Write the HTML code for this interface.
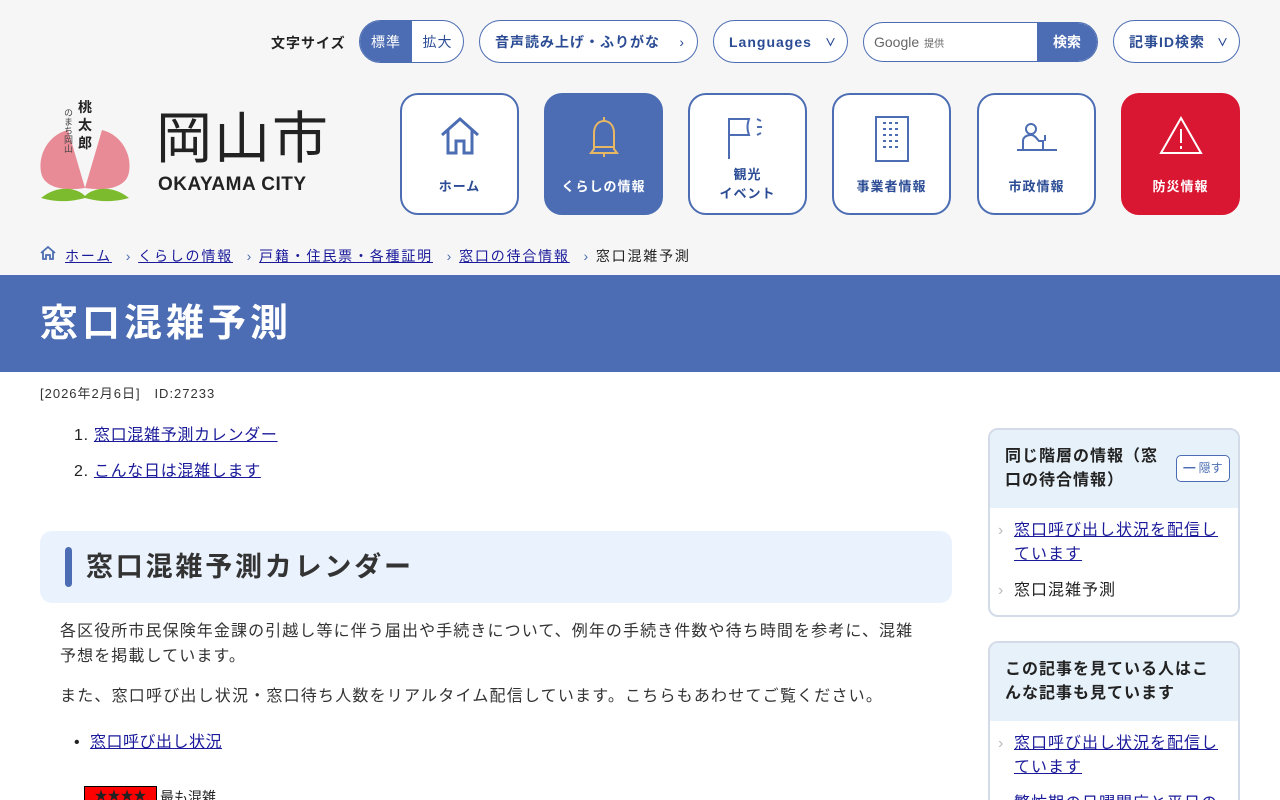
<!DOCTYPE html>
<html><head><meta charset="utf-8"><style>
*{box-sizing:border-box;margin:0;padding:0}
html,body{width:1280px;height:800px;overflow:hidden}
body{background:#fff;font-family:"Liberation Sans","Noto Sans CJK JP",sans-serif;color:#222;position:relative}
.top{position:absolute;left:0;top:0;width:1280px;height:275px;background:#f6f6f6}
.a{position:absolute}
.pill{position:absolute;border:1.5px solid #4c6db3;border-radius:22px;background:#fff;color:#2b4c94;font-weight:bold;font-size:14px;display:flex;align-items:center;letter-spacing:1px}
.nav{position:absolute;top:93px;width:119px;height:122px;border:2px solid #4c6db3;border-radius:18px;background:#fff;color:#2b4c94;font-weight:bold;font-size:13px;text-align:center;letter-spacing:1px}
.nav svg{position:absolute;left:50%;transform:translateX(-50%);top:20px}
.nav .t{position:absolute;left:0;right:0;top:82px;line-height:19px}
a{color:#1a1a9a;text-decoration:underline}
.bc{position:absolute;top:246px;font-size:14px;letter-spacing:1.8px}
.side{position:absolute;left:988px;width:252px;border:2px solid #d3dbe8;border-radius:10px;overflow:hidden;background:#fff}
.side h3{background:#e7f1f9;font-size:16px;line-height:24px;padding:15px 15px;letter-spacing:1px}
.side li{list-style:none;font-size:16px;line-height:24px;padding-left:24px;padding-right:12px;position:relative;letter-spacing:1px;margin-bottom:12px}
.side li:before{content:"›";position:absolute;left:8px;color:#bbb}
</style></head><body>
<div class="top"></div>
<div class="a" style="left:271px;top:33px;font-size:14px;font-weight:bold;letter-spacing:1px">文字サイズ</div>
<div class="pill" style="left:359px;top:20px;width:105px;height:43px;overflow:hidden;padding:0">
<div style="width:52px;height:100%;background:#4c6db3;color:#fff;display:flex;align-items:center;justify-content:center;font-weight:normal">標準</div><div style="flex:1;text-align:center;font-weight:normal">拡大</div></div>
<div class="pill" style="left:479px;top:20px;width:219px;height:43px;padding-left:15px">音声読み上げ・ふりがな<span style="position:absolute;right:12px;font-weight:normal">›</span></div>
<div class="pill" style="left:713px;top:20px;width:135px;height:43px;padding-left:15px">Languages<span style="position:absolute;right:10px;font-size:11px">∨</span></div>
<div class="pill" style="left:863px;top:22px;width:235px;height:40px;overflow:hidden;padding-left:10px;color:#666;font-weight:normal;letter-spacing:0">Google <span style="font-size:10px;margin-left:5px">提供</span>
<div style="position:absolute;right:0;top:0;width:60px;height:100%;background:#4c6db3;color:#fff;font-weight:bold;display:flex;align-items:center;justify-content:center">検索</div></div>
<div class="pill" style="left:1113px;top:20px;width:127px;height:43px;padding-left:15px">記事ID検索<span style="position:absolute;right:10px;font-size:11px">∨</span></div>

<svg class="a" style="left:38px;top:100px" width="95" height="106" viewBox="0 0 95 106">
<path d="M47 88 L30 30 C10 35 0 55 3 72 C5 85 20 92 47 88Z" fill="#e98b96"/>
<path d="M47 88 L64 30 C84 35 94 55 91 72 C89 85 74 92 47 88Z" fill="#e98b96"/>
<path d="M3 98 C20 84 40 88 47 96 C54 88 74 84 91 98 C70 104 55 100 47 98 C39 100 24 104 3 98Z" fill="#7dbb2e"/>
<text x="40" y="12" font-size="14" font-weight="bold" fill="#222">桃</text>
<text x="40" y="30" font-size="14" font-weight="bold" fill="#222">太</text>
<text x="40" y="48" font-size="14" font-weight="bold" fill="#222">郎</text>
<text x="30" y="8" font-size="9" fill="#444" writing-mode="tb">のまち岡山</text>
</svg>
<div class="a" style="left:156px;top:108px;font-size:56px;line-height:62px;letter-spacing:2px;color:#222">岡山市</div>
<div class="a" style="left:158px;top:174px;font-size:19px;font-weight:bold;letter-spacing:0.5px;color:#222">OKAYAMA CITY</div>

<div class="nav" style="left:400px"><svg width="44" height="44" viewBox="0 0 44 44" fill="none" stroke="#4c6db3" stroke-width="3"><path d="M4 20 L22 4 L40 20 M10 15 V38 H18 V26 H26 V38 H34 V15"/></svg><div class="t">ホーム</div></div>
<div class="nav" style="left:544px;background:#4c6db3;color:#fff"><svg width="44" height="46" viewBox="0 0 44 46" fill="none" stroke="#e8b763" stroke-width="2"><path d="M22 2 V6 M12 34 V18 C12 10 17 6 22 6 C27 6 32 10 32 18 V34 L35 38 H9 L12 34Z M12 32 H32 M22 38 V42"/></svg><div class="t">くらしの情報</div></div>
<div class="nav" style="left:688px"><svg width="50" height="46" viewBox="0 0 50 46" fill="none" stroke="#4c6db3" stroke-width="2"><path d="M6 44 V4 H26 C24 10 24 14 26 20 H6 M34 4 L38 6 M34 12 H39 M34 20 L38 18"/></svg><div class="t" style="top:70px">観光<br>イベント</div></div>
<div class="nav" style="left:832px"><svg width="36" height="48" viewBox="0 0 36 48" fill="none" stroke="#4c6db3" stroke-width="2"><rect x="2" y="2" width="32" height="44"/><path d="M9 8h18M9 14h18M9 20h18M9 26h18M9 32h18" stroke-dasharray="3 3"/></svg><div class="t">事業者情報</div></div>
<div class="nav" style="left:977px"><svg width="44" height="44" viewBox="0 0 44 44" fill="none" stroke="#4c6db3" stroke-width="2"><circle cx="16" cy="14" r="5"/><path d="M8 34 V26 C8 22 12 20 16 20 C20 20 22 24 24 26 H28 V34 M2 35 H42 M30 26 V20"/></svg><div class="t">市政情報</div></div>
<div class="nav" style="left:1121px;background:#da1733;border-color:#da1733;color:#fff"><svg width="44" height="42" viewBox="0 0 44 42" fill="none" stroke="#fff" stroke-width="2"><path d="M22 3 L42 38 H2 Z M22 14 V28 M22 31 V34"/></svg><div class="t">防災情報</div></div>

<svg class="a" style="left:40px;top:245px" width="16" height="16" viewBox="0 0 16 16" fill="none" stroke="#4c6db3" stroke-width="1.8"><path d="M1 8 L8 2 L15 8 M3 6 V14 H6 V10 H10 V14 H13 V6"/></svg>
<div class="bc" style="left:65px"><a href="#">ホーム</a> <span style="color:#4c6db3;margin:0 6px 0 8px">›</span><a href="#">くらしの情報</a> <span style="color:#4c6db3;margin:0 6px 0 8px">›</span><a href="#">戸籍・住民票・各種証明</a> <span style="color:#4c6db3;margin:0 6px 0 8px">›</span><a href="#">窓口の待合情報</a> <span style="color:#4c6db3;margin:0 6px 0 8px">›</span>窓口混雑予測</div>

<div class="a" style="left:0;top:275px;width:1280px;height:97px;background:#4c6db3"></div>
<div class="a" style="left:40px;top:298px;font-size:38px;font-weight:bold;color:#fff;letter-spacing:4px;line-height:52px">窓口混雑予測</div>
<div class="a" style="left:40px;top:383px;font-size:13px;letter-spacing:1px;color:#333">[2026年2月6日]&nbsp;&nbsp;&nbsp;ID:27233</div>

<div class="a" style="left:74px;top:418px;font-size:16px;line-height:36px;letter-spacing:0.7px">1. <a href="#">窓口混雑予測カレンダー</a><br>2. <a href="#">こんな日は混雑します</a></div>

<div class="a" style="left:40px;top:531px;width:912px;height:72px;background:#eaf2fd;border-radius:12px"></div>
<div class="a" style="left:65px;top:547px;width:7px;height:40px;background:#4c6db3;border-radius:4px"></div>
<div class="a" style="left:86px;top:548px;font-size:27px;font-weight:bold;letter-spacing:2.8px;line-height:38px;color:#333">窓口混雑予測カレンダー</div>

<div class="a" style="left:60px;top:619px;width:862px;font-size:16px;line-height:25px;letter-spacing:1.1px;color:#333">各区役所市民保険年金課の引越し等に伴う届出や手続きについて、例年の手続き件数や待ち時間を参考に、混雑予想を掲載しています。</div>
<div class="a" style="left:60px;top:682px;font-size:16px;letter-spacing:1.2px;color:#333">また、窓口呼び出し状況・窓口待ち人数をリアルタイム配信しています。こちらもあわせてご覧ください。</div>
<div class="a" style="left:74px;top:728px;font-size:16px;letter-spacing:0.5px">•&nbsp;&nbsp;<a href="#">窓口呼び出し状況</a></div>
<div class="a" style="left:84px;top:786px;width:73px;height:20px;background:#f00;border:1.5px solid #000;font-size:13px;text-align:center;line-height:18px">★★★★</div>
<div class="a" style="left:160px;top:787px;font-size:14px">最も混雑</div>

<div class="side" style="top:428px;height:189px"><h3 style="padding-right:80px">同じ階層の情報（窓口の待合情報）</h3>
<div class="a" style="right:8px;top:25px;width:54px;height:27px;border:1px solid #4c6db3;border-radius:5px;font-size:12px;color:#4c6db3;text-align:center;line-height:25px;background:#fff">━ 隠す</div>
<ul style="padding-top:11px"><li><a href="#">窓口呼び出し状況を配信しています</a></li><li>窓口混雑予測</li></ul></div>
<div class="side" style="top:641px;height:200px"><h3>この記事を見ている人はこんな記事も見ています</h3>
<ul style="padding-top:11px"><li><a href="#">窓口呼び出し状況を配信しています</a></li><li><a href="#">繁忙期の日曜開庁と平日の</a></li></ul></div>
</body></html>
